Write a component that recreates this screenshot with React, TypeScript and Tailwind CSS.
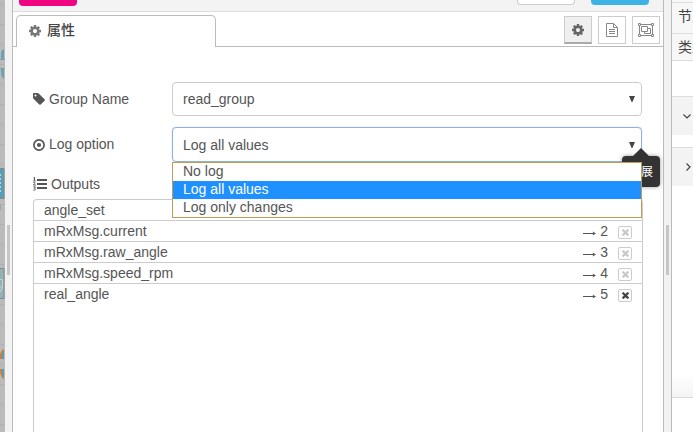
import React from 'react';

const ui = "font-['Liberation_Sans','Noto_Sans_CJK_SC',sans-serif]";

function Gear({ className }: { className: string }) {
  return (
    <svg viewBox="0 128 1536 1536" className={className} fill="currentColor">
      <path d="M1024 896q0-106-75-181t-181-75-181 75-75 181 75 181 181 75 181-75 75-181zm512-109v222q0 12-8 23t-20 13l-185 28q-19 54-39 91 35 50 107 138 10 12 10 25t-9 23q-27 37-99 108t-94 71q-12 0-26-9l-138-108q-44 23-91 38-16 136-29 186-7 28-36 28h-222q-14 0-24.5-8.5t-11.5-21.5l-28-184q-49-16-90-37l-141 107q-10 9-25 9-14 0-25-11-126-114-165-168-7-10-7-23 0-12 8-23 15-21 51-66.5t54-70.5q-27-50-41-99l-183-27q-13-2-21-12.5t-8-23.5v-222q0-12 8-23t19-13l186-28q14-46 39-92-40-57-107-138-10-12-10-24 0-10 9-23 26-36 98.5-107.5t94.5-71.5q13 0 26 10l138 107q44-23 91-38 16-136 29-186 7-28 36-28h222q14 0 24.5 8.5t11.5 21.5l28 184q49 16 90 37l142-107q9-9 24-9 13 0 25 10 129 119 165 170 7 8 7 22 0 12-8 23-15 21-51 66.5t-54 70.5q26 50 41 98l183 28q13 2 21 12.5t8 23.5z" />
    </svg>
  );
}

function Tag() {
  return (
    <svg viewBox="0 128 1536 1536" className="h-3 w-3" fill="currentColor">
      <path d="M448 448q0-53-37.5-90.5T320 320t-90.5 37.5T192 448t37.5 90.5T320 576t90.5-37.5T448 448zm1067 576q0 53-37 90l-491 492q-39 37-91 37-53 0-90-37L91 890q-38-37-64.5-101T0 672V256q0-52 38-90t90-38h416q53 0 117 26.5T763 219l715 714q37 39 37 91z" />
    </svg>
  );
}

function Target() {
  return (
    <svg viewBox="0 0 12 12" className="h-3 w-3">
      <circle cx="6" cy="6" r="5.1" fill="none" stroke="currentColor" strokeWidth="1.7" />
      <circle cx="6" cy="6" r="2.1" fill="currentColor" />
    </svg>
  );
}

function OrderedList() {
  return (
    <svg viewBox="0 0 14 14" className="h-3.5 w-3.5" fill="none" stroke="currentColor">
      <path d="M4 3h10M4 7h10M4 11h10" strokeWidth="2" />
      <path d="M.5 1l1-.6v3.2M.3 3.800h2.400M.4 5.500c1.900-.9 2.300.3.100 2.500h2.300M.4 9.900h2l-1 1.400c1.700.1 1.300 2.500-1.100 1.800" strokeWidth="1" />
    </svg>
  );
}

function Doc() {
  return (
    <svg viewBox="0 0 12 14" className="h-3.5 w-3" fill="none" stroke="currentColor">
      <path d="M.5.5h7l4 4v9H.5zM7.5.5v4h4M3 6.5h6M3 8.5h6M3 10.5h6" />
    </svg>
  );
}

function ObjectGroup() {
  return (
    <svg viewBox="0 0 16 14" className="h-3.5 w-4" fill="none" stroke="currentColor">
      <path d="M2.5 1.5h11M2.5 12.5h11M1.5 2.5v9M14.5 2.5v9M3.5 3.5h6v5h-6zM9.5 5.5h3v5h-6v-2" />
      <path d="M.5.5h2v2h-2zM13.5.5h2v2h-2zM.5 11.5h2v2h-2zM13.5 11.5h2v2h-2z" fill="white" />
    </svg>
  );
}

function Cross() {
  return (
    <svg viewBox="110 362 1188 1188" className="h-[7px] w-[7px]" fill="currentColor">
      <path d="M1298 1322q0 40-28 68l-136 136q-28 28-68 28t-68-28l-294-294-294 294q-28 28-68 28t-68-28L138 1390q-28-28-28-68t28-68l294-294-294-294q-28-28-28-68t28-68l136-136q28-28 68-28t68 28l294 294 294-294q28-28 68-28t68 28l136 136q28 28 28 68t-28 68L976 960l294 294q28 28 28 68z" />
    </svg>
  );
}

function Caret() {
  return <svg viewBox="0 0 6 6" className="h-1.5 w-1.5 fill-[#444]"><path d="M0 0h6L3.4 6h-.8z" /></svg>;
}

function WorkspaceEdge() {
  return (
    <svg viewBox="0 0 5 432" className="h-full w-[5px] shrink-0 bg-[#bbb]">
      {Array.from({ length: 22 }, (_, i) => (
        <path key={i} d={`M0 ${i * 20 + 4.5}h4`} stroke="#b0b0b0" />
      ))}
      <path d="M0 59.5h5M0 68.5h5" stroke="#999" />
      <path d="M4 49Q1 50 1 54v5h3zM1 69h3v10Q1 77 1 72z" fill="#6ba0b5" />
      <path d="M-1 168.500h5v30h-5z" fill="#579fb9" stroke="#888" />
      <path d="M.5 174v20" stroke="#ccc" strokeWidth="1" strokeDasharray="2 2" />
      <path d="M0 204h1v6H0z" fill="#8cabab" />
      <path d="M-1 268.500h5v30h-5z" fill="#91b3b4" stroke="#888" />
      <path d="M0 279.500h2.500v8L0 292.500M2 287h-2" fill="none" stroke="#ccc" />
      <path d="M4 349Q1 350 0 354v5h4zM0 369h4v10Q1 378 0 372z" fill="#c58245" />
      <path d="M4 351Q2 352 2 355v4h2zM2 369h2v8Q2 376 2 372z" fill="#5b9cb5" />
    </svg>
  );
}

function Grip() {
  return (
    <div className="flex w-[7px] shrink-0 flex-col bg-[#f2f2f2] pt-[225px] pl-0.5">
      <div className="h-[50px] w-[3px] bg-[#c6c6c6]" />
    </div>
  );
}

const outputs = [
  { name: 'angle_set', port: 1 },
  { name: 'mRxMsg.current', port: 2 },
  { name: 'mRxMsg.raw_angle', port: 3 },
  { name: 'mRxMsg.speed_rpm', port: 4 },
  { name: 'real_angle', port: 5 },
];

function OutputRow({ name, port }: { name: string; port: number }) {
  const last = port === outputs.length;
  return (
    <li className={`flex shrink-0 items-center pr-2.5 pl-2.5 ${last ? 'h-5' : 'h-[21px] border-b border-[#ccc]'}`}>
      <span className="grow leading-5">{name}</span>
      <svg viewBox="0 0 13 5" className="mt-1 mr-1 h-[5px] w-[13px]" fill="none" stroke="currentColor">
        <path d="M0 2.500h12" />
        <path d="M9.500 .5L13 2.500 9.500 4.500l.8-2z" fill="currentColor" stroke="none" />
      </svg>
      <span className="mr-2.5 leading-5">{port}</span>
      <span className={`mt-[3px] flex h-[13px] w-3.5 items-center justify-center rounded-xs border border-[#ccc] ${last ? 'text-[#444]' : 'text-[#c8c8c8]'}`}>
        <Cross />
      </span>
    </li>
  );
}

function Tray() {
  return (
    <main className="flex h-full w-[652px] shrink-0 flex-col border-x border-[#bbb] bg-white">
      <header className="flex h-3 shrink-0 items-start border-b border-[#ddd] bg-[#f3f3f3] pl-1.5">
        <div className="h-1.5 w-[58px] rounded-b bg-[#f0047f]" />
        <div className="ml-[440px] h-[5px] w-[58px] rounded-b border border-t-0 border-[#ccc] bg-white" />
        <div className="ml-4 h-[5px] w-[58px] rounded-b bg-[#3db2e5]" />
      </header>
      <nav className="flex h-[35px] shrink-0 items-end">
        <div className="h-px w-[3px] bg-[#bbb]" />
        <div className="flex h-8 w-[200px] items-center gap-1.5 rounded-t-[5px] border border-b-0 border-[#bbb] pb-0.5 pl-3 text-[14px] font-medium text-[#444]">
          <Gear className="h-3 w-3 text-[#777]" />
          <span>属性</span>
        </div>
        <div className="flex h-8 grow justify-end gap-1.5 border-b border-[#bbb] pt-px pr-[3px] text-[#888]">
          <div className="flex h-7 w-7 items-center justify-center border border-b-2 border-[#ccc] border-b-[#aaa] bg-[#efefef] text-[#666]"><Gear className="h-3 w-3" /></div>
          <div className="flex h-7 w-7 items-center justify-center border border-[#ccc]"><Doc /></div>
          <div className="flex h-7 w-7 items-center justify-center border border-[#ccc]"><ObjectGroup /></div>
        </div>
      </nav>
      <section className="flex min-h-0 grow flex-col pt-[35px] pr-5 pl-5 text-[14px] text-[#555]">
        <div className="flex h-[34px] shrink-0 items-center">
          <label className="flex w-[139px] items-center gap-1"><Tag />Group Name</label>
          <div className="flex h-full w-[470px] items-center justify-between rounded-[4px] border border-[#ccc] pr-1.5 pl-2.5"><span className="mt-px">read_group</span><Caret /></div>
        </div>
        <div className="relative mt-[11px] flex h-[35px] shrink-0 items-center">
          <label className="flex w-[139px] items-center gap-1"><Target />Log option</label>
          <div className="flex h-full w-[470px] items-center justify-between rounded-[4px] border border-[#8cb2df] pr-1.5 pl-2.5 shadow-[0_0_1px_#8cb2df]"><span className="mt-px">Log all values</span><Caret /></div>
          <div className="absolute top-[29px] -right-[17px] flex h-[31px] w-[38px] items-center justify-end rounded-[4px] bg-[#333] pr-[7px] text-[12px] text-white shadow-[0_0_4px_#999]">
            扩展
            <span className="absolute -top-2 left-[11px] border-x-8 border-b-8 border-x-transparent border-b-[#333]" />
          </div>
          <ul className="absolute top-[35px] right-px h-14 w-[470px] border border-[#c29c50] bg-white">
            <li className="h-[18px] pl-2.5 leading-4">No log</li>
            <li className="h-[18px] bg-[#1e90ff] pl-2.5 leading-4 text-white">Log all values</li>
            <li className="h-[18px] pl-2.5 leading-4">Log only changes</li>
          </ul>
        </div>
        <div className="mt-3 flex h-5 shrink-0 items-center gap-1"><OrderedList />Outputs</div>
        <ul className="mt-[5px] flex min-h-0 w-[610px] grow flex-col rounded-t-[4px] border border-b-0 border-[#ccc]">
          {outputs.map((o) => <OutputRow key={o.port} {...o} />)}
        </ul>
      </section>
    </main>
  );
}

function Sidebar() {
  return (
    <aside className="flex h-full w-[22px] shrink-0 flex-col overflow-hidden border-l border-[#bbb] bg-white text-[14px] whitespace-nowrap text-[#444]">
      <div className="h-[3px] shrink-0 border-b border-[#ddd] bg-[#f7f7f7]" />
      <div className="h-[31px] shrink-0 border-b border-[#ddd] bg-[#f7f7f7] pl-1.5 leading-[27px]">节点</div>
      <div className="h-[27px] shrink-0 border-b border-[#ddd] bg-[#f7f7f7] pl-1.5 leading-[26px]">类型</div>
      <div className="h-[35px] shrink-0" />
      <div className="flex h-[39px] shrink-0 items-center border-t border-[#ddd] bg-[#f3f3f3] pl-[11px]">
        <svg viewBox="0 0 8 5" className="h-[5px] w-2 shrink-0" fill="none" stroke="currentColor" strokeWidth="1.2"><path d="M.5.5L4 4 7.500.5" /></svg>
      </div>
      <div className="h-3 shrink-0" />
      <div className="flex h-[39px] shrink-0 items-center border-t border-[#ddd] bg-[#f3f3f3] pl-3.5">
        <svg viewBox="0 0 5 8" className="h-2 w-[5px] shrink-0" fill="none" stroke="currentColor" strokeWidth="1.2"><path d="M.5.5L4 4 .5 7.500" /></svg>
      </div>
      <div className="grow" />
      <div className="h-6 shrink-0 border-b border-[#ddd] bg-linear-to-b from-white to-[#f4f4f4]" />
      <div className="h-[34px] shrink-0" />
    </aside>
  );
}

export default function App() {
  return (
    <div className={`flex h-[432px] w-[693px] overflow-hidden bg-white ${ui}`}>
      <WorkspaceEdge />
      <Grip />
      <Tray />
      <Grip />
      <Sidebar />
    </div>
  );
}
